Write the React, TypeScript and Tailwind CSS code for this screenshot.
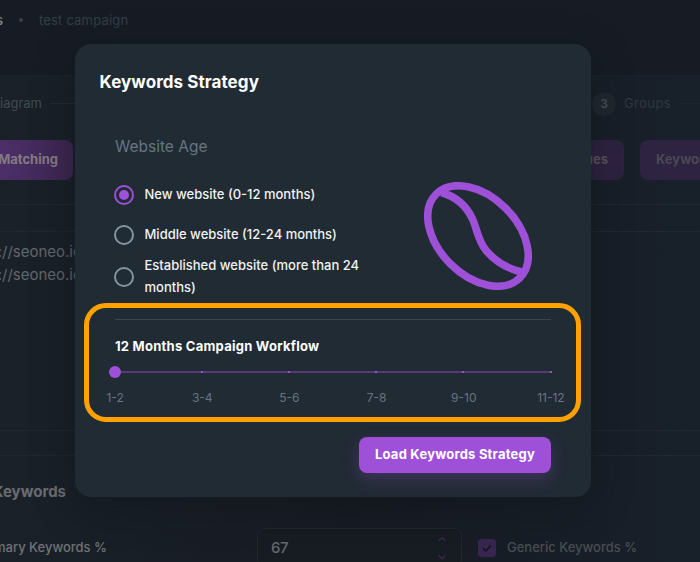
import React from "react";

const months = ["1-2", "3-4", "5-6", "7-8", "9-10", "11-12"];

function Radio({ checked = false }: { checked?: boolean }) {
  return (
    <span
      className={
        checked
          ? "flex size-5 shrink-0 items-center justify-center rounded-full border-2 border-[#9e50d8]"
          : "flex size-5 shrink-0 items-center justify-center rounded-full border-2 border-[#8294a3]"
      }
    >
      {checked && <span className="size-2.5 rounded-full bg-[#9e50d8]" />}
    </span>
  );
}

function Bean() {
  return (
    <svg className="h-[108px] w-[108px]" viewBox="0 0 108 108" fill="none" stroke="#9e50d8" strokeWidth="7.6">
      <ellipse cx="54" cy="54" rx="59.2" ry="39.2" transform="rotate(45 54 54)" />
      <path d="M17.5 10.500C33 15 43 25 48.500 37C53.500 48 53.500 58 62.500 69C71 79 83 86.500 97.500 90" />
    </svg>
  );
}

function Backdrop() {
  return (
    <div className="flex h-full flex-col bg-[#171c24]">
      <div className="flex h-[75px] shrink-0 items-start pt-[10px] text-[13px] leading-5">
        <div className="flex w-[3px] justify-end font-medium text-[#85898d]">Campaigns</div>
        <span className="mt-2 ml-4 size-1 rounded-full bg-[#394049]" />
        <span className="ml-4 tracking-[0.18px] text-[#353c45]">test campaign</span>
      </div>
      <div className="flex grow flex-col border-t border-[#1a222a] bg-linear-to-r from-[#1a2129] via-[#171b23] to-[#18202a]">
        <div className="flex h-14 shrink-0 items-center text-[13px] text-[#414951]">
          <div className="flex w-[42px] justify-end whitespace-nowrap">Diagram</div>
          <span className="mb-0.5 ml-2 h-px w-[542px] bg-[#242b33]" />
          <span className="flex size-6 items-center justify-center rounded-full bg-[#20272f] text-[12px] font-semibold text-[#4a5056]">3</span>
          <span className="ml-2 w-[47px] whitespace-nowrap tracking-[0.4px] text-[#30383f]">Groups</span>
          <span className="mb-0.5 ml-2 h-px grow bg-[#1e252c]" />
        </div>
        <div className="mt-2 flex h-10 shrink-0 text-[13px] font-bold">
          <div className="flex w-[73px] shrink-0 items-center justify-end rounded-r-lg bg-linear-to-r from-[#4c2f69] to-[#3c2650] pr-[15px] text-[#827b86]">
            <span className="whitespace-nowrap">Matching</span>
          </div>
          <div className="ml-[417px] flex w-[134px] shrink-0 items-center justify-end rounded-lg bg-[#2f2242] pr-4 text-[#5a535f]">Values</div>
          <div className="ml-4 flex w-[120px] shrink-0 items-center rounded-lg bg-[#2e2341] pl-4 text-[#4c4852]">Keywords</div>
        </div>
        <div className="mt-6 h-px shrink-0 bg-[#20272e]" />
        <div className="mt-[26px] h-[200px] shrink-0 border-y border-[#20272e] pt-2 text-[15px] leading-[23px] text-[#63676b]">
          <div className="flex w-[82px] justify-end whitespace-nowrap">https://seoneo.io</div>
          <div className="flex w-[82px] justify-end whitespace-nowrap">https://seoneo.io</div>
        </div>
        <div className="mt-6 h-px shrink-0 bg-[#20272e]" />
        <div className="mt-6 flex w-[66px] justify-end text-[15px] leading-6 font-bold text-[#6a6d70]">Keywords</div>
        <div className="mt-6 flex h-10 shrink-0 items-center text-[13px] font-medium">
          <div className="flex w-[107px] justify-end whitespace-nowrap text-[#6f7376]">Primary Keywords %</div>
          <div className="ml-[150px] flex h-10 w-[205px] items-center justify-between rounded-lg border border-[#20272e] bg-[#171b22] pr-[15px] pl-[13px]">
            <span className="text-[15px] tracking-[-0.4px] text-[#64686c]">67</span>
            <svg className="h-[26px] w-2" viewBox="0 0 8 26" fill="none" stroke="#3c2750" strokeWidth="1.4">
              <path d="M.7 6L4 2.700L7.300 6M.7 20.500L4 23.800L7.300 20.500" />
            </svg>
          </div>
          <span className="ml-4 flex size-[18px] items-center justify-center rounded bg-[#382650]">
            <svg className="size-2.5" viewBox="0 0 10 10" fill="none" stroke="#15191f" strokeWidth="1.800">
              <path d="M1 5.200L3.800 8L9 2.200" />
            </svg>
          </span>
          <span className="ml-[11px] whitespace-nowrap text-[#484d52]">Generic Keywords %</span>
        </div>
      </div>
    </div>
  );
}

export default function App() {
  return (
    <div className="relative h-[562px] w-[700px] overflow-hidden font-['Inter','Liberation_Sans',sans-serif]">
      <Backdrop />
      <div className="absolute top-[44px] left-[75px] flex h-[453px] w-[516px] flex-col rounded-2xl bg-[#212b34] px-10 shadow-[0_8px_40px_rgba(14,17,22,0.45)]">
        <h1 className="mt-[26px] -ml-[15.500px] text-[17px] leading-6 font-bold tracking-[0.08px] text-white">Keywords Strategy</h1>
        <h2 className="mt-[41px] text-[15.500px] leading-6 text-[#657583]">Website Age</h2>
        <div className="mt-[25px] flex h-[122px]">
          <div className="-ml-px flex w-[260px] flex-col text-[13px] leading-[22px] font-medium text-[#f0f2f3]">
            <label className="flex h-[22px] shrink-0 items-center gap-[10.500px]">
              <Radio checked />
              <span className="-mt-0.5 whitespace-nowrap">New website (0-12 months)</span>
            </label>
            <label className="mt-[18px] flex h-[22px] shrink-0 items-center gap-[10.500px]">
              <Radio />
              <span className="-mt-0.5 whitespace-nowrap">Middle website (12-24 months)</span>
            </label>
            <label className="mt-[9px] flex h-11 shrink-0 items-center gap-[10.500px]">
              <Radio />
              <span className="-mt-0.5 whitespace-nowrap">
                Established website (more than 24
                <br />
                months)
              </span>
            </label>
          </div>
          <div className="-mt-[2px] ml-[50px]">
            <Bean />
          </div>
        </div>
        <hr className="mt-[13px] border-[#3b454e]" />
        <h3 className="mt-[15px] text-[13px] leading-[22px] font-bold tracking-[0.25px] text-white">12 Months Campaign Workflow</h3>
        <div className="mt-[9px] -ml-1.5 flex h-3 items-center">
          <span className="size-3 shrink-0 rounded-full bg-[#9e50d8]" />
          <div className="-mr-px flex h-0.5 grow bg-[#573a78]">
            <span className="ml-[80px] size-0.5 bg-[#9850cf]" />
            <span className="ml-[85px] size-0.5 bg-[#9850cf]" />
            <span className="ml-[85px] size-0.5 bg-[#9850cf]" />
            <span className="ml-[85px] size-0.5 bg-[#9850cf]" />
            <span className="ml-auto size-0.5 bg-[#9850cf]" />
          </div>
        </div>
        <div className="-mx-[43.500px] mt-[10px] flex h-5 shrink-0 text-[12px] leading-5 text-[#657583]">
          {months.map((m) => (
            <span key={m} className="w-[87.200px] text-center">{m}</span>
          ))}
        </div>
        <button className="mt-[29px] ml-auto h-9 w-48 shrink-0 rounded-lg bg-[#9e50d8] text-[13px] font-bold tracking-[0.22px] whitespace-nowrap text-white shadow-[0_6px_16px_rgba(158,80,216,0.25)]">
          Load Keywords Strategy
        </button>
      </div>
      <div className="pointer-events-none absolute top-[303px] left-[84px] h-[119px] w-[497px] rounded-[22px] border-5 border-[#ffa200]" />
    </div>
  );
}
